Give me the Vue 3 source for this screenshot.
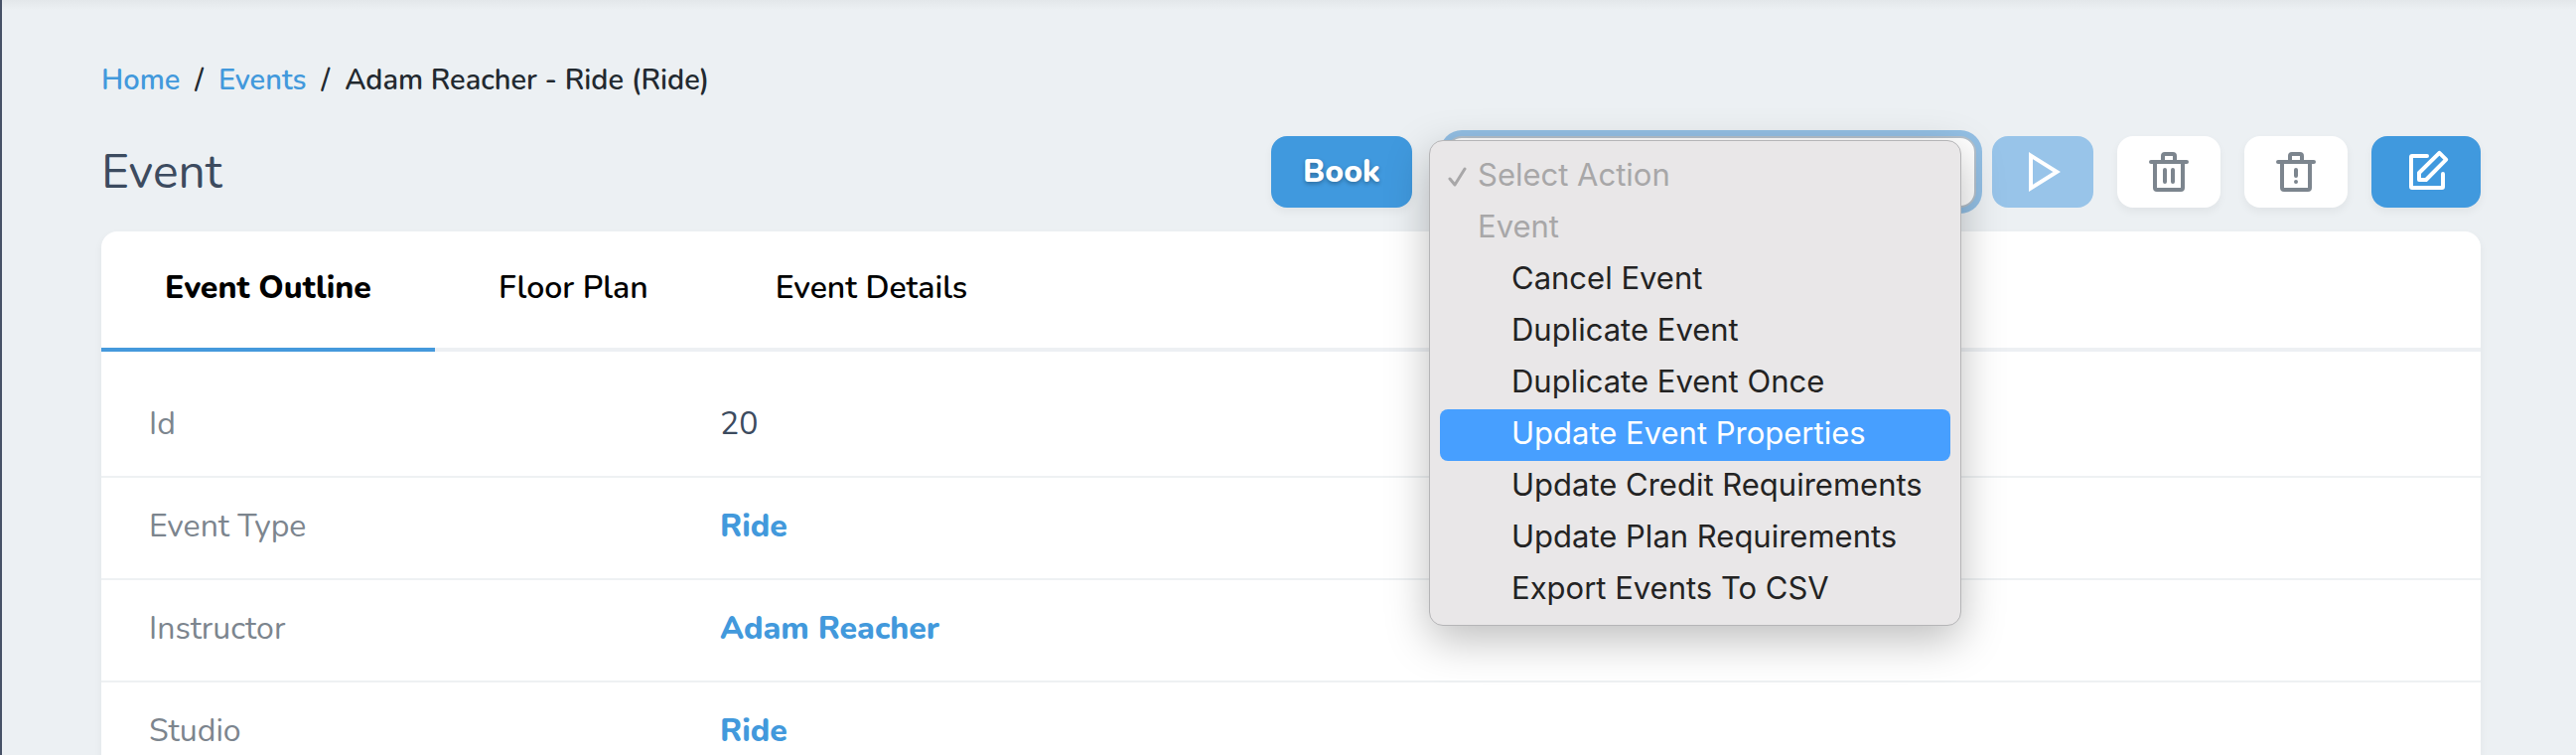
<template>
  <div class="page">
    <nav class="breadcrumbs" aria-label="Breadcrumb">
      <a href="#">Home</a>
      <span>/</span>
      <a href="#">Events</a>
      <span>/</span>
      <span>Adam Reacher - Ride (Ride)</span>
    </nav>

    <header class="toolbar">
      <h1>Event</h1>
      <button class="btn btn-primary btn-book" type="button">Book</button>

      <div class="action-picker">
        <select v-model="selectedAction" class="action-select" aria-label="Select Action">
          <option value="" disabled>Select Action</option>
          <optgroup label="Event">
            <option v-for="action in actions" :key="action" :value="action">{{ action }}</option>
          </optgroup>
        </select>

        <ul v-if="menuOpen" class="menu" role="listbox" aria-label="Select Action">
          <li class="menu-item muted" role="option" aria-disabled="true">
            <svg class="check" viewBox="0 0 20 24" aria-hidden="true">
              <path d="M2 14l5 6L17 4" />
            </svg>
            Select Action
          </li>
          <li class="menu-item muted" role="presentation">Event</li>
          <li
            v-for="action in actions"
            :key="action"
            class="menu-item nested"
            :class="{ active: action === highlighted }"
            role="option"
            :aria-selected="action === selectedAction"
            @mouseenter="highlighted = action"
            @click="pick(action)"
          >{{ action }}</li>
        </ul>
      </div>

      <button class="btn btn-primary btn-run" type="button" aria-label="Run Action" :disabled="!selectedAction">
        <svg width="28" height="40" viewBox="0 0 28 40">
          <path d="M2 3.6L28.2 20L2 36.4Z" />
        </svg>
      </button>
      <button class="btn btn-white" type="button" aria-label="Delete">
        <svg class="round" width="40" height="40" viewBox="0 0 40 40">
          <path d="M2 10H38M14 10V4a2 2 0 0 1 2-2h8a2 2 0 0 1 2 2v6M6 10v26a2 2 0 0 0 2 2h24a2 2 0 0 0 2-2V10M16 18v12M24 18v12" />
        </svg>
      </button>
      <button class="btn btn-white" type="button" aria-label="Force Delete">
        <svg class="round" width="40" height="40" viewBox="0 0 40 40">
          <path d="M2 10H38M14 10V4a2 2 0 0 1 2-2h8a2 2 0 0 1 2 2v6M6 10v26a2 2 0 0 0 2 2h24a2 2 0 0 0 2-2V10M20 18v6M20 30v0" />
        </svg>
      </button>
      <button class="btn btn-primary btn-edit" type="button" aria-label="Edit">
        <svg class="round" width="44" height="44" viewBox="0 0 44 44">
          <path d="M23 6H8a1 1 0 0 0-1 1v30a1 1 0 0 0 1 1h30a1 1 0 0 0 1-1V24" />
          <path d="M35.4 2.8L42.2 9.6L22 30H15V23Z" />
        </svg>
      </button>
    </header>

    <main class="card">
      <div class="tabs" role="tablist">
        <button
          v-for="tab in tabs"
          :key="tab"
          class="tab"
          :class="{ active: tab === activeTab }"
          type="button"
          role="tab"
          :aria-selected="tab === activeTab"
          @click="activeTab = tab"
        >{{ tab }}</button>
      </div>

      <dl class="fields">
        <div v-for="field in fields" :key="field.label" class="field">
          <dt>{{ field.label }}</dt>
          <dd>
            <a v-if="field.link" href="#">{{ field.value }}</a>
            <template v-else>{{ field.value }}</template>
          </dd>
        </div>
      </dl>
    </main>
  </div>
</template>

<script setup>
import { ref } from 'vue';

const tabs = ['Event Outline', 'Floor Plan', 'Event Details'];
const activeTab = ref('Event Outline');

const actions = [
  'Cancel Event',
  'Duplicate Event',
  'Duplicate Event Once',
  'Update Event Properties',
  'Update Credit Requirements',
  'Update Plan Requirements',
  'Export Events To CSV',
];
const selectedAction = ref('');
const highlighted = ref('Update Event Properties');
const menuOpen = ref(true);

const fields = [
  { label: 'Id', value: '20' },
  { label: 'Event Type', value: 'Ride', link: true },
  { label: 'Instructor', value: 'Adam Reacher', link: true },
  { label: 'Studio', value: 'Ride', link: true },
];

function pick(action) {
  selectedAction.value = action;
  menuOpen.value = false;
}
</script>

<style>
body {
  background: #ecf0f3;
}
</style>

<style scoped>
.page {
  box-sizing: border-box;
  height: 100vh;
  overflow: hidden;
  padding: 61px 96px 0 100px;
  border-left: 2px solid #475267;
  background: linear-gradient(#e3e7ea, #ecf0f3 10px);
  font-family: Nunito, Lato, sans-serif;
  font-size: 32px;
  line-height: 40px;
  color: #3c4b5f;
}

a {
  color: #4299dc;
  text-decoration: none;
}

.breadcrumbs {
  display: flex;
  gap: 15px;
  font-size: 29px;
  font-weight: 600;
  color: #22292f;
}

.toolbar {
  display: flex;
  align-items: center;
  gap: 24px;
  margin: 36px 0 24px;
}

h1 {
  flex: 1;
  margin: 0;
  font-size: 48px;
  font-weight: 400;
}

.btn {
  display: flex;
  align-items: center;
  justify-content: center;
  box-sizing: border-box;
  width: 104px;
  height: 72px;
  padding: 0;
  border: none;
  border-radius: 16px;
  box-shadow: 0 4px 8px rgba(0, 0, 0, 0.05);
  font: inherit;
  cursor: pointer;
}

.btn svg {
  overflow: visible;
  fill: none;
  stroke: currentColor;
  stroke-width: 4;
}

.btn svg.round {
  stroke-linecap: round;
  stroke-linejoin: round;
}

.btn-primary {
  background: #4099de;
  color: #fff;
}

.btn-white {
  background: #fff;
  color: #7c858e;
}

.btn-book {
  width: 142px;
  margin-right: 10px;
  font-weight: 800;
  text-shadow: 0 2px 4px rgba(0, 0, 0, 0.3);
}

.btn-run {
  width: 102px;
  margin-left: -8px;
}

.btn-run:disabled {
  background: #98c4e9;
  box-shadow: none;
}

.btn-edit {
  width: 110px;
}

.action-picker {
  position: relative;
  width: 534px;
}

.action-select {
  display: block;
  box-sizing: border-box;
  width: 100%;
  height: 72px;
  padding: 0 24px;
  border: 2px solid #b4c0cb;
  border-radius: 16px;
  background: #fff;
  box-shadow: 0 0 0 6px #93bfe4;
  font: inherit;
  color: inherit;
  appearance: none;
}

/* Native style popup, drawn over the select */
.menu {
  position: absolute;
  z-index: 10;
  top: 4px;
  left: -17px;
  right: 15px;
  margin: 0;
  padding: 10px 10px 9px;
  border: 1px solid #b5b5b7;
  border-radius: 14px;
  background: #e9e7e8;
  box-shadow: 0 14px 44px rgba(0, 0, 0, 0.26);
  font-family: Inter, sans-serif;
  font-size: 31px;
  color: #232323;
  list-style: none;
}

.menu-item {
  position: relative;
  box-sizing: border-box;
  height: 52px;
  padding-left: 38px;
  border-radius: 8px;
  line-height: 48px;
  white-space: nowrap;
}

.menu-item.muted {
  color: #a8a7a8;
}

.menu-item.nested {
  padding-left: 72px;
}

.menu-item.active {
  background: #479fff;
  color: #fff;
}

.check {
  position: absolute;
  top: 14px;
  left: 8px;
  width: 20px;
  height: 24px;
  fill: none;
  stroke: #a8a7a8;
  stroke-width: 3;
  stroke-linecap: round;
  stroke-linejoin: round;
}

.card {
  border-radius: 16px;
  background: #fff;
  box-shadow: 0 4px 8px rgba(0, 0, 0, 0.05);
}

.tabs {
  display: flex;
  box-shadow: inset 0 -4px #edf0f3;
}

.tab {
  padding: 37px 64px 40px;
  border: none;
  border-bottom: 4px solid transparent;
  background: none;
  font: inherit;
  font-weight: 600;
  color: #000;
  cursor: pointer;
}

.tab.active {
  border-bottom-color: #4599dc;
  font-weight: 800;
}

.fields {
  margin: 0;
  padding: 24px 0 0;
}

.field {
  display: flex;
  padding: 29px 48px 32px;
  border-bottom: 2px solid #eef1f3;
}

dt {
  width: 25%;
  color: #7c858e;
}

dd {
  margin: 0;
}

dd a {
  font-weight: 800;
}
</style>
